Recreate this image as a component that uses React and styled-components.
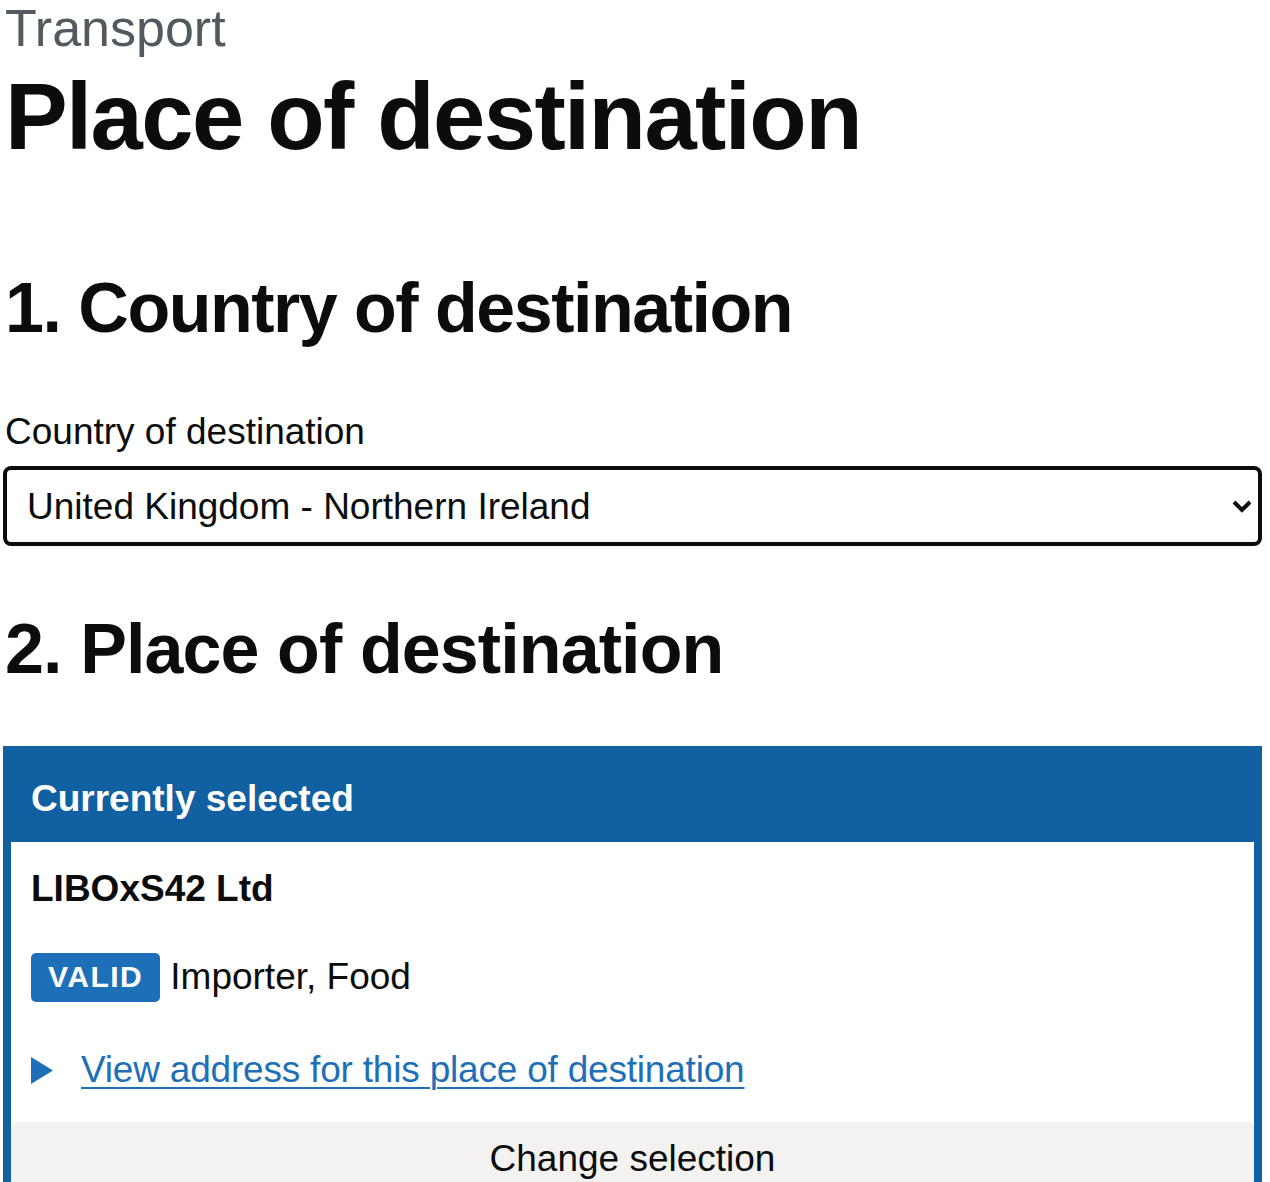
import React from 'react';
import styled, { createGlobalStyle } from 'styled-components';

const Global = createGlobalStyle`
  html, body {
    margin: 0;
    padding: 0;
    background: #ffffff;
  }
  body {
    font-family: "Liberation Sans", Arial, sans-serif;
    color: #0b0c0c;
    -webkit-font-smoothing: antialiased;
  }
`

const Page = styled.main`
  padding: 0 8px 0 3px;
  overflow: hidden;
  height: 1182px;
`

const Caption = styled.span`
  display: block;
  margin: 0 0 0 2px;
  font-size: 52px;
  line-height: 56px;
  color: #505a5f;
`

const HeadingXL = styled.h1`
  margin: 11px 0 0 2px;
  font-size: 94px;
  line-height: 100px;
  font-weight: 700;
  letter-spacing: -1.6px;
`

const HeadingL = styled.h2`
  margin: ${p => p.$top}px 0 0 2px;
  font-size: 70px;
  line-height: 80px;
  font-weight: 700;
  letter-spacing: ${p => p.$spacing || -1.5}px;
`

const Label = styled.label`
  display: block;
  margin: 59px 0 0 2px;
  font-size: 37px;
  line-height: 50px;
`

const SelectWrap = styled.div`
  position: relative;
  margin-top: 9px;
`

const Select = styled.select`
  appearance: none;
  -webkit-appearance: none;
  display: block;
  width: 100%;
  height: 80px;
  box-sizing: border-box;
  border: 4px solid #0b0c0c;
  border-radius: 8px;
  padding: 0 60px 0 20px;
  background: #ffffff;
  font-family: "Liberation Sans", Arial, sans-serif;
  font-size: 37px;
  color: #0b0c0c;
`

const Chevron = styled.svg`
  position: absolute;
  right: 10px;
  top: 33px;
  width: 20px;
  height: 14px;
  pointer-events: none;
`

const Panel = styled.section`
  margin-top: 57px;
  border: 8px solid #1160a2;
  border-top: 0;
  border-bottom: 0;
`

const PanelHeader = styled.div`
  background: #1160a2;
  margin: 0 -8px;
  padding: 28px 28px 18px;
  color: #ffffff;
  font-size: 37px;
  line-height: 50px;
  font-weight: 700;
`

const PanelBody = styled.div`
  padding: 22px 20px 27px;
  background: #ffffff;
`

const Name = styled.p`
  margin: 0;
  font-size: 37px;
  line-height: 50px;
  font-weight: 700;
`

const StatusRow = styled.p`
  display: flex;
  align-items: center;
  gap: 10px;
  margin: 38px 0 0;
  font-size: 37px;
  line-height: 50px;
`

const Tag = styled.strong`
  display: inline-flex;
  align-items: center;
  height: 49px;
  padding: 0 17px;
  border-radius: 5px;
  background: #1d70b8;
  color: #ffffff;
  font-size: 30px;
  font-weight: 700;
  letter-spacing: 1.5px;
  text-transform: uppercase;
`

const Details = styled.div`
  display: flex;
  align-items: center;
  gap: 28px;
  margin-top: 43px;
  font-size: 37px;
  line-height: 50px;
`

const Arrow = styled.svg`
  width: 22px;
  height: 27px;
  flex: none;
`

const Link = styled.a`
  color: #1d70b8;
  text-decoration: underline;
  text-decoration-thickness: 2px;
  text-underline-offset: 5px;
  letter-spacing: -0.2px;
  cursor: pointer;
`

const ChangeButton = styled.button`
  display: block;
  width: 100%;
  border: 0;
  border-radius: 6px 6px 0 0;
  background: #f3f2f1;
  padding: 12px 0 20px;
  font-family: "Liberation Sans", Arial, sans-serif;
  font-size: 37px;
  line-height: 50px;
  color: #0b0c0c;
  cursor: pointer;
`

export default function App() {
  return (
    <>
      <Global />
      <Page>
        <Caption>Transport</Caption>
        <HeadingXL>Place of destination</HeadingXL>

        <HeadingL $top={101}>1. Country of destination</HeadingL>
        <Label htmlFor="country">Country of destination</Label>
        <SelectWrap>
          <Select id="country" defaultValue="gb-nir">
            <option value="gb-nir">United Kingdom - Northern Ireland</option>
          </Select>
          <Chevron viewBox="0 0 20 14">
            <path d="M2 3 L10 11 L18 3" fill="none" stroke="#0b0c0c" strokeWidth="4" />
          </Chevron>
        </SelectWrap>

        <HeadingL $top={63} $spacing={-0.9}>2. Place of destination</HeadingL>

        <Panel>
          <PanelHeader>Currently selected</PanelHeader>
          <PanelBody>
            <Name>LIBOxS42 Ltd</Name>
            <StatusRow>
              <Tag>Valid</Tag>
              Importer, Food
            </StatusRow>
            <Details>
              <Arrow viewBox="0 0 22 27">
                <polygon points="0,0 22,13.5 0,27" fill="#1d70b8" />
              </Arrow>
              <Link>View address for this place of destination</Link>
            </Details>
          </PanelBody>
          <ChangeButton>Change selection</ChangeButton>
        </Panel>
      </Page>
    </>
  );
}
